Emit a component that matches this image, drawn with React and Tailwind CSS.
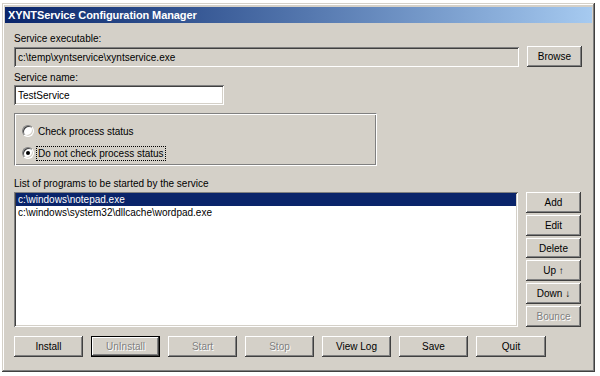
import React from 'react';

const raised =
  'shadow-[inset_-1px_-1px_#404040,inset_1px_1px_#ffffff,inset_-2px_-2px_#808080,inset_2px_2px_#d4d0c8]';
const sunken =
  'shadow-[inset_1px_1px_#808080,inset_-1px_-1px_#ffffff,inset_2px_2px_#404040,inset_-2px_-2px_#d4d0c8]';

const Button = ({ children, disabled, isDefault, className = '' }) => {
  if (isDefault) {
    return (
      <div className={`border border-black ${className}`}>
        <div
          className={`w-full h-full flex items-center justify-center bg-[#d4d0c8] ${raised} ${
            disabled ? 'text-[#808080] [text-shadow:1px_1px_0_#ffffff]' : ''
          }`}
        >
          {children}
        </div>
      </div>
    );
  }
  return (
    <div
      className={`flex items-center justify-center bg-[#d4d0c8] ${raised} ${
        disabled ? 'text-[#808080] [text-shadow:1px_1px_0_#ffffff]' : ''
      } ${className}`}
    >
      {children}
    </div>
  );
};

const Radio = ({ checked }) => (
  <div className="w-[12px] h-[12px] rounded-full bg-white border border-t-[#808080] border-l-[#808080] border-b-white border-r-white flex items-center justify-center shadow-[inset_1px_1px_#404040,inset_-1px_-1px_#d4d0c8] shrink-0">
    {checked && <div className="w-[4px] h-[4px] rounded-full bg-black" />}
  </div>
);

const programs = ['c:\\windows\\notepad.exe', 'c:\\windows\\system32\\dllcache\\wordpad.exe'];

export default function App() {
  return (
    <div className="w-[600px] h-[376px] bg-white pt-[3px] pl-[2px] font-['Liberation_Sans',Arial,sans-serif] text-[10px] text-black leading-[13px]">
      <div className="w-[593px] h-[369px] bg-[#d4d0c8] px-[3px] pt-[4px] shadow-[inset_-1px_-1px_#404040,inset_1px_1px_#d4d0c8,inset_-2px_-2px_#808080,inset_2px_2px_#ffffff]">
        {/* Title bar */}
        <div className="h-[16px] bg-gradient-to-r from-[#0a246a] to-[#a6caf0] pl-[3px] flex items-center text-white font-bold text-[11px] tracking-[-0.1px]">
          XYNTService Configuration Manager
        </div>

        <div className="pl-[9px] flex flex-col">
          <div className="mt-[9px] h-[13px]">Service executable:</div>
          <div className="mt-[1px] h-[21px] flex items-end gap-[8px]">
            <div className={`w-[505px] h-[20px] bg-[#d4d0c8] ${sunken} flex items-center pl-[4px]`}>
              c:\temp\xyntservice\xyntservice.exe
            </div>
            <Button className="w-[55px] h-[21px]">Browse</Button>
          </div>

          <div className="mt-[4px] h-[13px]">Service name:</div>
          <div className={`mt-[1px] w-[210px] h-[20px] bg-white ${sunken} flex items-center pl-[4px]`}>
            TestService
          </div>

          {/* Group box */}
          <div className="mt-[8px] w-[363px] h-[53px] border border-t-[#808080] border-l-[#808080] border-b-white border-r-white shadow-[inset_1px_1px_#ffffff,inset_-1px_-1px_#808080] pl-[7px] pt-[9px] flex flex-col gap-[6px]">
            <div className="h-[16px] flex items-center gap-[2px]">
              <Radio />
              <span className="px-[1px] border border-transparent">Check process status</span>
            </div>
            <div className="h-[16px] flex items-center gap-[2px]">
              <Radio checked />
              <span className="px-[1px] border border-dotted border-black">Do not check process status</span>
            </div>
          </div>

          <div className="mt-[11px] h-[13px]">List of programs to be started by the service</div>
          <div className="mt-[2px] h-[135px] flex gap-[8px]">
            <div className={`w-[504px] h-full bg-white ${sunken} p-[2px] pt-[1px]`}>
              {programs.map((p, i) => (
                <div
                  key={p}
                  className={`h-[13px] pl-[2px] ${i === 0 ? 'bg-[#0a246a] text-white' : ''}`}
                >
                  {p}
                </div>
              ))}
            </div>
            <div className="w-[55px] flex flex-col gap-[2px]">
              <Button className="h-[21px]">Add</Button>
              <Button className="h-[21px]">Edit</Button>
              <Button className="h-[21px]">Delete</Button>
              <Button className="h-[21px]">Up ↑</Button>
              <Button className="h-[21px]">Down ↓</Button>
              <Button className="h-[21px]" disabled>Bounce</Button>
            </div>
          </div>

          {/* Bottom buttons */}
          <div className="mt-[9px] h-[21px] flex gap-[8px]">
            <Button className="w-[69px] h-[21px]">Install</Button>
            <Button className="w-[69px] h-[21px]" disabled isDefault>UnInstall</Button>
            <Button className="w-[69px] h-[21px]" disabled>Start</Button>
            <Button className="w-[69px] h-[21px]" disabled>Stop</Button>
            <Button className="w-[69px] h-[21px]">View Log</Button>
            <Button className="w-[69px] h-[21px]">Save</Button>
            <Button className="w-[70px] h-[21px]">Quit</Button>
          </div>
        </div>
      </div>
    </div>
  );
}
